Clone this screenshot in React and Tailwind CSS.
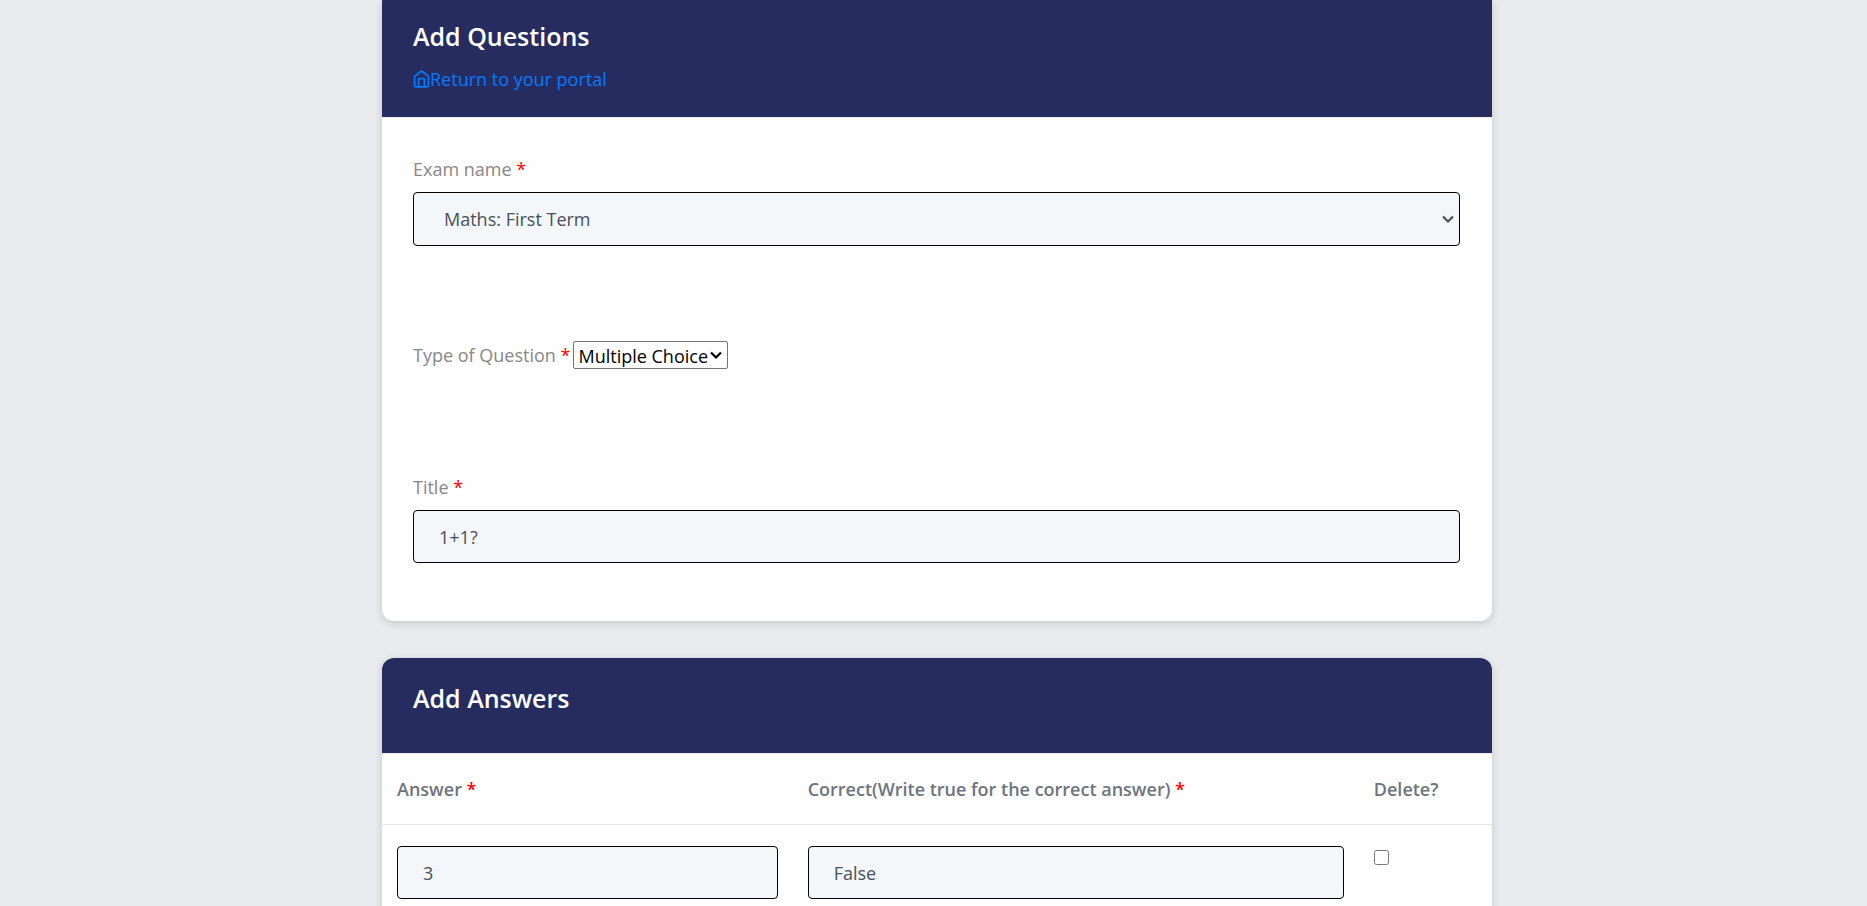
import React from "react";

const field =
  "block w-full rounded border border-black bg-[#f3f7fa] text-lg text-[#495057]";

function Required() {
  return <span className="text-[#ff0000]">*</span>;
}

function HomeIcon() {
  return (
    <svg
      className="h-[18px] w-[17px]"
      viewBox="0 0 17 18"
      fill="none"
      stroke="currentColor"
      strokeWidth="1.7"
      strokeLinecap="round"
      strokeLinejoin="round"
      aria-hidden="true"
    >
      <path d="M1.500 6.400 8.500 1l7 5.400v8.900c0 .9-.7 1.600-1.600 1.600H3.100c-.9 0-1.600-.7-1.600-1.600z" />
      <path d="M5.600 16.700V9.500c0-.5.4-.9.9-.9h4c.5 0 .9.400.9.900v7.200" />
    </svg>
  );
}

function Chevron() {
  return (
    <svg
      className="h-3 w-3"
      viewBox="0 0 12 12"
      fill="none"
      stroke="currentColor"
      strokeWidth="2.2"
      aria-hidden="true"
    >
      <path d="M1 3.500 6 8.500l5-5" />
    </svg>
  );
}

export default function App() {
  return (
    <main className="min-h-screen bg-[#e9ebee] pl-[7px] font-['Open_Sans',sans-serif] text-lg text-[#888888]">
      <div className="mx-auto flex max-w-[1110px] flex-col gap-[37px]">
        <section className="overflow-hidden rounded-b-xl bg-[#fefefe] shadow-[0_2px_8px_rgba(0,0,0,0.16)]">
          <header className="bg-[#262c60] px-[31px] pt-[19px] pb-[22px]">
            <h1 className="text-[25px] leading-[34px] font-semibold text-white">
              Add Questions
            </h1>
            <a
              href="#portal"
              className="mt-2.5 flex w-fit items-center leading-8 text-[#007bff]"
            >
              <HomeIcon />
              Return to your portal
            </a>
          </header>
          <div className="border-t border-[#f0f0f3] pt-[37px] pr-8 pb-[58px] pl-[31px]">
            <label htmlFor="exam" className="mb-2 block leading-[29px]">
              Exam name <Required />
            </label>
            <div className="relative text-[#495057]">
              <select
                id="exam"
                className={`${field} h-[54px] appearance-none px-[30px]`}
              >
                <option>Maths: First Term</option>
              </select>
              <span className="pointer-events-none absolute inset-y-0 right-1.5 flex items-center">
                <Chevron />
              </span>
            </div>

            <div className="mt-[95px] flex h-7 items-center gap-[3px]">
              <label htmlFor="type">
                Type of Question <Required />
              </label>
              <div className="relative text-black">
                <select
                  id="type"
                  className="block h-7 appearance-none rounded-xs border border-[#767676] bg-white pr-[19px] pl-1 text-black"
                >
                  <option>Multiple Choice</option>
                </select>
                <span className="pointer-events-none absolute inset-y-0 right-1.5 flex items-center">
                  <Chevron />
                </span>
              </div>
            </div>

            <label htmlFor="title" className="mt-[104px] mb-2 block leading-[29px]">
              Title <Required />
            </label>
            <input
              id="title"
              type="text"
              defaultValue="1+1?"
              className={`${field} h-[53px] px-[25px]`}
            />
          </div>
        </section>

        <section className="overflow-hidden rounded-xl bg-[#fefefe] shadow-[0_2px_8px_rgba(0,0,0,0.16)]">
          <header className="bg-[#262c60] px-[31px] pt-[23px] pb-[38px]">
            <h2 className="text-[25px] leading-[34px] font-semibold text-white">
              Add Answers
            </h2>
          </header>
          <table className="w-full table-fixed border-t border-[#e9ecef]">
            <colgroup>
              <col className="w-[37%]" />
              <col className="w-[51%]" />
              <col className="w-[12%]" />
            </colgroup>
            <thead>
              <tr className="h-[71px] border-b border-[#e3e5e8] text-left text-[#6c757d]">
                <th id="col-answer" className="px-[15px] font-semibold">
                  Answer <Required />
                </th>
                <th id="col-correct" className="px-[15px] font-semibold">
                  Correct(Write true for the correct answer) <Required />
                </th>
                <th id="col-delete" className="px-[15px] font-semibold">
                  Delete?
                </th>
              </tr>
            </thead>
            <tbody>
              <tr className="align-top">
                <td className="px-[15px] py-[21px]">
                  <input
                    type="text"
                    aria-labelledby="col-answer"
                    defaultValue="3"
                    className={`${field} h-[53px] px-[25px]`}
                  />
                </td>
                <td className="px-[15px] py-[21px]">
                  <input
                    type="text"
                    aria-labelledby="col-correct"
                    defaultValue="False"
                    className={`${field} h-[53px] px-[25px]`}
                  />
                </td>
                <td className="px-[15px] py-[25px]">
                  <input
                    type="checkbox"
                    aria-labelledby="col-delete"
                    className="block h-[15px] w-[15px]"
                  />
                </td>
              </tr>
            </tbody>
          </table>
        </section>
      </div>
    </main>
  );
}
